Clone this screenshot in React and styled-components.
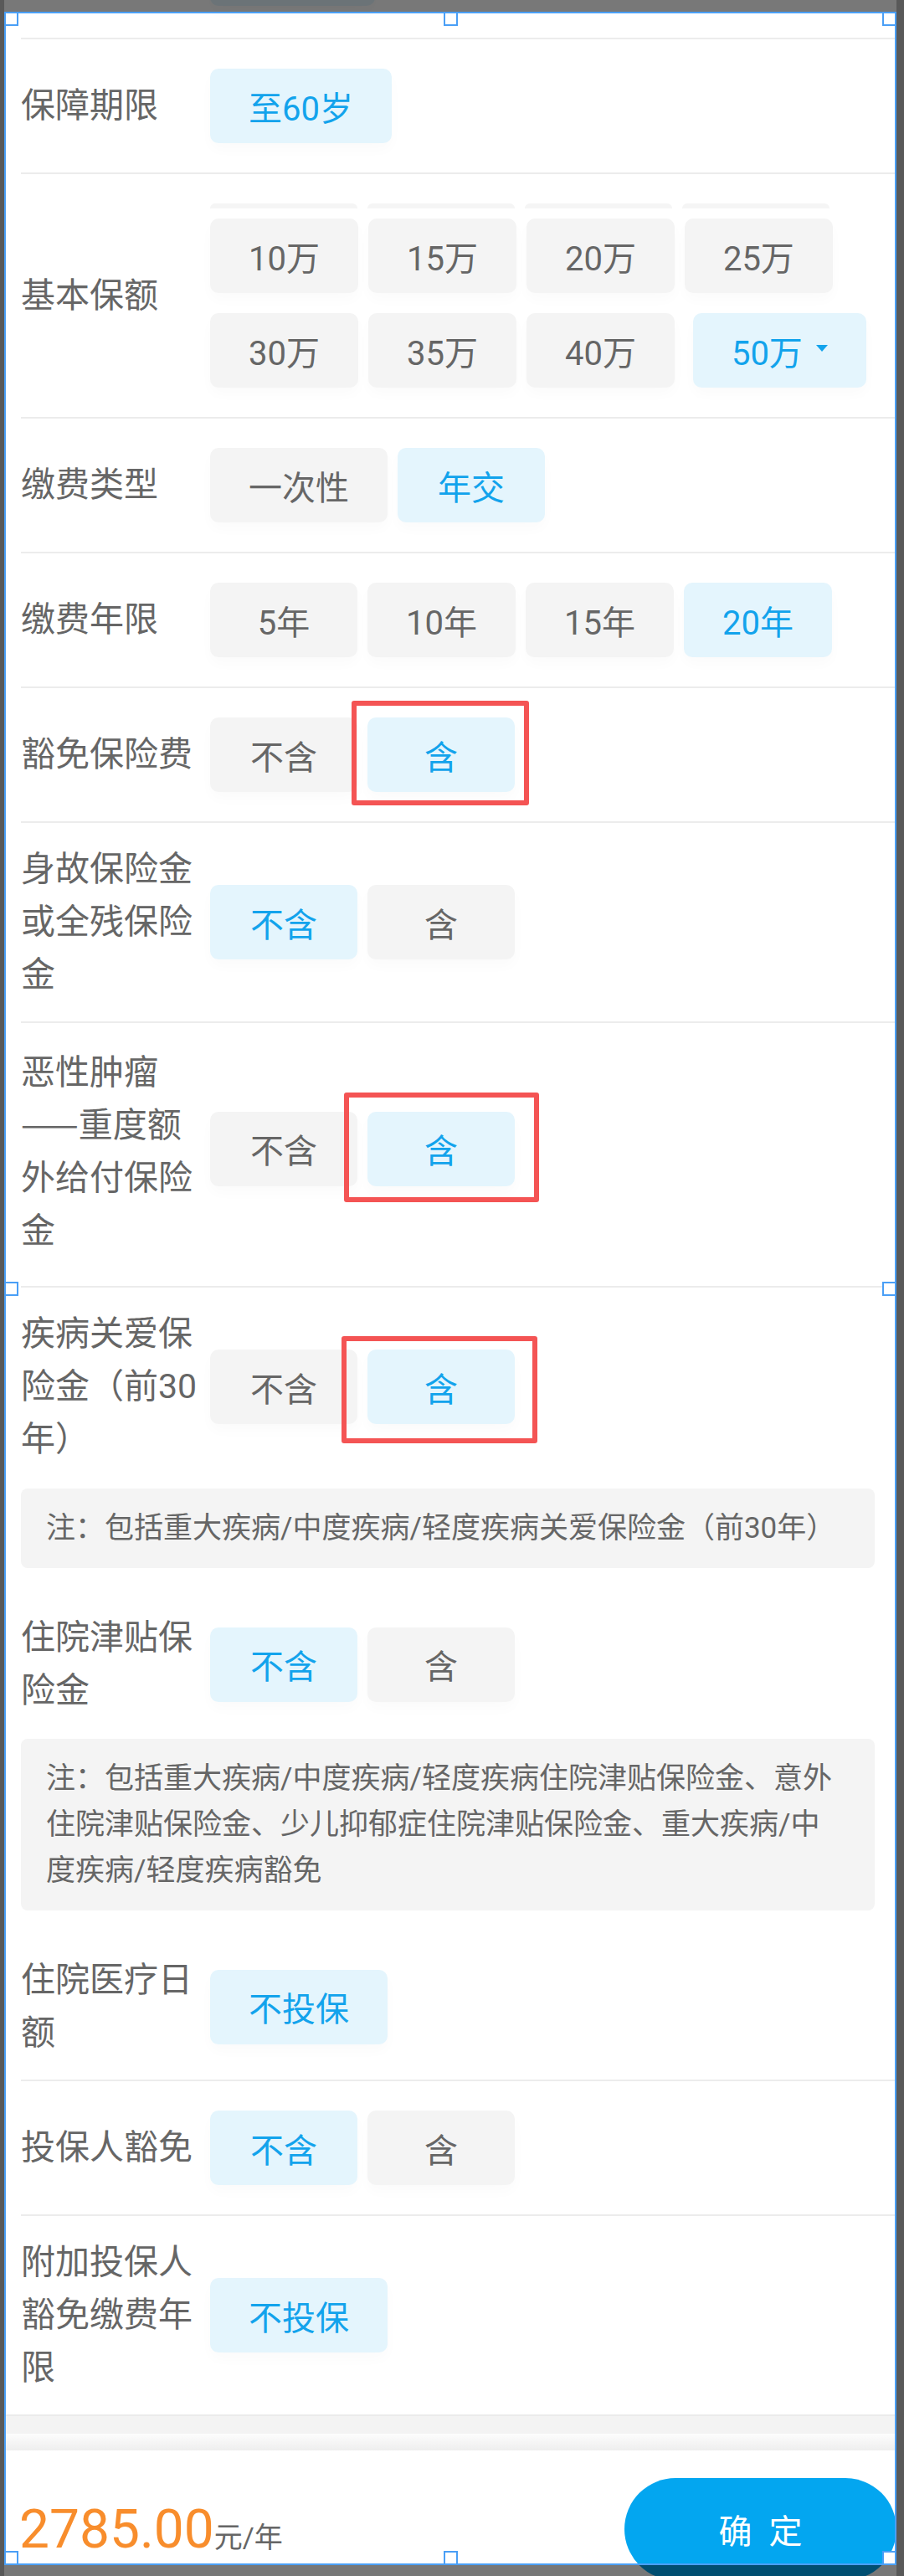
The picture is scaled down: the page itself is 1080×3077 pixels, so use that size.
import React from "react";
import styled, { createGlobalStyle, css } from "styled-components";

const GlobalStyle = createGlobalStyle`
  html, body { margin: 0; padding: 0; }
  body {
    background: #bdbdbd;
    font-family: Roboto, "Noto Sans CJK SC", sans-serif;
  }
  * { box-sizing: border-box; }
`;

const Screen = styled.div`
  position: relative;
  width: 1080px;
  height: 3077px;
  overflow: hidden;
  background: #bdbdbd;
`;

const Panel = styled.main`
  margin-left: 5px;
  width: 1066px;
  height: 100%;
  background: #ffffff;
  display: flex;
  flex-direction: column;
`;

const List = styled.div`
  padding-left: 20px;
  flex: none;
`;

const ClipSection = styled.div`
  height: 47px;
  overflow: hidden;
  display: flex;
  align-items: flex-end;
  padding: 0 0 26px 226px;
  border-bottom: 2px solid #ececec;
`;

const Section = styled.section`
  padding: 23px 0 ${(p) => 23 + (p.$extra || 0)}px;
  border-bottom: ${(p) => (p.$divider ? "2px solid #ececec" : "none")};
`;

const Line = styled.div`
  display: flex;
  align-items: center;
`;

const Label = styled.div`
  flex: none;
  width: 216px;
  margin-right: 10px;
  padding: 1px 0;
  font-family: ${(p) =>
    p.$cjk ? '"Noto Sans CJK SC", sans-serif' : 'Roboto, "Noto Sans CJK SC", sans-serif'};
  font-size: 41px;
  line-height: 63px;
  color: #666666;
`;

const Options = styled.div`
  flex: 1;
  display: flex;
  flex-wrap: wrap;
  gap: 24px 12px;
  padding: ${(p) => (p.$flat ? 0 : 12)}px 0;
`;

const AmountStack = styled.div`
  flex: 1;
  display: flex;
  flex-direction: column;
  gap: 12px;
  padding: 12px 0;
`;

const GhostRow = styled.div`
  display: flex;
  gap: 12px;
`;

const Ghost = styled.div`
  width: 176px;
  height: 6px;
  border-radius: 6px 6px 0 0;
  background: #f5f5f5;
`;

const Choice = styled.div`
  position: relative;
  flex: none;
  min-width: ${(p) => p.$min || 176}px;
  height: 89px;
  padding: 0 46px;
  margin-left: ${(p) => p.$shift || 0}px;
  display: flex;
  align-items: center;
  justify-content: center;
  gap: 16px;
  border-radius: 10px;
  white-space: nowrap;
  font-size: 40px;
  color: ${(p) => (p.$on ? "#12a3ec" : "#666666")};
  background: ${(p) => (p.$on ? "#e4f5fd" : "#f4f4f4")};
  box-shadow: 0 8px 16px rgba(0, 0, 0, 0.02);
`;

const Caret = styled.span`
  width: 0;
  height: 0;
  margin-top: -5px;
  border-left: 7px solid transparent;
  border-right: 7px solid transparent;
  border-top: 8px solid currentColor;
`;

const Mark = styled.span`
  position: absolute;
  top: ${(p) => -p.$t}px;
  right: ${(p) => -p.$r}px;
  bottom: ${(p) => -p.$b}px;
  left: ${(p) => -p.$l}px;
  border: 6px solid #f45454;
  border-radius: 3px;
  pointer-events: none;
`;

const Note = styled.p`
  margin: ${(p) => p.$gap || 26}px 26px 0 0;
  padding: 20px 36px 20px 30px;
  background: #f4f4f4;
  border-radius: 8px;
  font-size: 35px;
  line-height: 55px;
  color: #666666;
`;

const Band = styled.div`
  flex: none;
  height: 23px;
  border-top: 2px solid #ebebeb;
  background: #f3f3f3;
`;

const Shade = styled.div`
  flex: none;
  height: 20px;
  background: linear-gradient(#fdfdfd, #eeeeee);
`;

const Footer = styled.footer`
  flex: 1;
  display: flex;
  justify-content: space-between;
  align-items: flex-start;
  padding: 33px 0 0 18px;
`;

const Price = styled.div`
  margin-top: 30px;
  line-height: 64px;
  white-space: nowrap;
`;

const Amount = styled.span`
  font-family: Roboto, sans-serif;
  font-size: 64px;
  color: #f88d2c;
`;

const Unit = styled.span`
  font-size: 34px;
  color: #666666;
`;

const Confirm = styled.button`
  flex: none;
  width: 325px;
  height: 122px;
  border: none;
  border-radius: 61px;
  background: #03a6f0;
  color: #ffffff;
  font-family: inherit;
  font-size: 40px;
  letter-spacing: 20px;
  padding: 0 0 0 20px;
`;

const Dim = styled.div`
  position: absolute;
  background: rgba(0, 0, 0, 0.53);
  pointer-events: none;
  ${(p) => css`
    left: ${p.$x}px;
    top: ${p.$y}px;
    width: ${p.$w}px;
    height: ${p.$h}px;
  `}
`;

const Frame = styled.div`
  position: absolute;
  left: 5px;
  top: 14px;
  width: 1066px;
  height: 3050px;
  border: 2px solid #4a9ff6;
  pointer-events: none;
`;

const Handle = styled.span`
  position: absolute;
  width: 17px;
  height: 17px;
  border: 2px solid #4a9ff6;
  background: #ffffff;
  ${(p) =>
    p.$h === "start"
      ? "left: -2px;"
      : p.$h === "end"
      ? "right: -2px;"
      : "left: calc(50% - 8.5px);"}
  ${(p) =>
    p.$v === "start"
      ? "top: -2px;"
      : p.$v === "end"
      ? "bottom: -2px;"
      : "top: calc(50% - 8.5px);"}
`;

const Pair = ({ on, mark }) => (
  <Options>
    <Choice $on={on === 0}>不含</Choice>
    <Choice $on={on === 1}>
      含
      {mark && <Mark $t={mark[0]} $r={mark[1]} $b={mark[2]} $l={mark[3]} />}
    </Choice>
  </Options>
);

const handles = [
  ["start", "start"],
  ["mid", "start"],
  ["end", "start"],
  ["start", "mid"],
  ["end", "mid"],
  ["start", "end"],
  ["mid", "end"],
  ["end", "end"],
];

export default function App() {
  return (
    <>
      <GlobalStyle />
      <Screen>
        <Panel>
          <List>
            <ClipSection>
              <Options>
                <Choice $on $min={197} />
              </Options>
            </ClipSection>

            <Section $divider>
              <Line>
                <Label>保障期限</Label>
                <Options>
                  <Choice $on>至60岁</Choice>
                </Options>
              </Line>
            </Section>

            <Section $divider>
              <Line>
                <Label>基本保额</Label>
                <AmountStack>
                  <GhostRow>
                    <Ghost />
                    <Ghost />
                    <Ghost />
                    <Ghost />
                  </GhostRow>
                  <Options $flat>
                    <Choice>10万</Choice>
                    <Choice>15万</Choice>
                    <Choice>20万</Choice>
                    <Choice>25万</Choice>
                    <Choice>30万</Choice>
                    <Choice>35万</Choice>
                    <Choice>40万</Choice>
                    <Choice $on $shift={10}>
                      50万
                      <Caret />
                    </Choice>
                  </Options>
                </AmountStack>
              </Line>
            </Section>

            <Section $divider>
              <Line>
                <Label>缴费类型</Label>
                <Options>
                  <Choice>一次性</Choice>
                  <Choice $on>年交</Choice>
                </Options>
              </Line>
            </Section>

            <Section $divider>
              <Line>
                <Label>缴费年限</Label>
                <Options>
                  <Choice>5年</Choice>
                  <Choice>10年</Choice>
                  <Choice>15年</Choice>
                  <Choice $on>20年</Choice>
                </Options>
              </Line>
            </Section>

            <Section $divider>
              <Line>
                <Label>豁免保险费</Label>
                <Pair on={1} mark={[20, 17, 16, 19]} />
              </Line>
            </Section>

            <Section $divider>
              <Line>
                <Label>身故保险金或全残保险金</Label>
                <Pair on={0} />
              </Line>
            </Section>

            <Section $divider $extra={14}>
              <Line>
                <Label $cjk>恶性肿瘤——重度额外给付保险金</Label>
                <Pair on={1} mark={[23, 29, 19, 28]} />
              </Line>
            </Section>

            <Section $extra={5}>
              <Line>
                <Label>疾病关爱保险金（前30年）</Label>
                <Pair on={1} mark={[16, 27, 23, 31]} />
              </Line>
              <Note>注：包括重大疾病/中度疾病/轻度疾病关爱保险金（前30年）</Note>
            </Section>

            <Section $extra={5}>
              <Line>
                <Label>住院津贴保险金</Label>
                <Pair on={0} />
              </Line>
              <Note $gap={25}>
                注：包括重大疾病/中度疾病/轻度疾病住院津贴保险金、意外住院津贴保险金、少儿抑郁症住院津贴保险金、重大疾病/中度疾病/轻度疾病豁免
              </Note>
            </Section>

            <Section $divider>
              <Line>
                <Label>住院医疗日额</Label>
                <Options>
                  <Choice $on>不投保</Choice>
                </Options>
              </Line>
            </Section>

            <Section $divider>
              <Line>
                <Label>投保人豁免</Label>
                <Pair on={0} />
              </Line>
            </Section>

            <Section>
              <Line>
                <Label>附加投保人豁免缴费年限</Label>
                <Options>
                  <Choice $on>不投保</Choice>
                </Options>
              </Line>
            </Section>
          </List>

          <Band />
          <Shade />
          <Footer>
            <Price>
              <Amount>2785.00</Amount>
              <Unit>元/年</Unit>
            </Price>
            <Confirm type="button">确定</Confirm>
          </Footer>
        </Panel>

        <Dim $x={0} $y={0} $w={1080} $h={14} />
        <Dim $x={0} $y={3064} $w={1080} $h={13} />
        <Dim $x={0} $y={14} $w={5} $h={3050} />
        <Dim $x={1071} $y={14} $w={9} $h={3050} />

        <Frame>
          {handles.map(([h, v]) => (
            <Handle key={h + v} $h={h} $v={v} />
          ))}
        </Frame>
      </Screen>
    </>
  );
}
